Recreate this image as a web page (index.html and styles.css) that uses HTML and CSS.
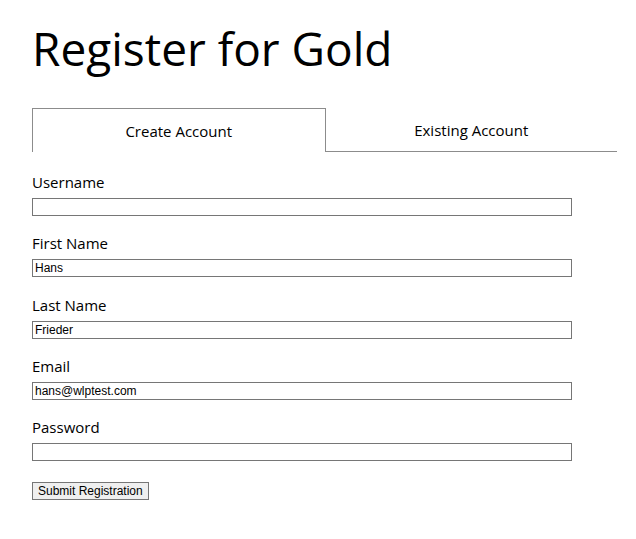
FILE: index.html
```html
<!DOCTYPE html>
<html>
<head>
<meta charset="utf-8">
<link rel="stylesheet" href="styles.css">
</head>
<body>
<div class="page">
  <h1 class="title">Register for Gold</h1>
  <div class="tabs">
    <div class="tab active">Create Account</div>
    <div class="tab">Existing Account</div>
  </div>
  <form class="form">
    <div class="field">
      <label class="label">Username</label>
      <input class="input" type="text" value="">
    </div>
    <div class="field">
      <label class="label">First Name</label>
      <input class="input" type="text" value="Hans">
    </div>
    <div class="field">
      <label class="label">Last Name</label>
      <input class="input" type="text" value="Frieder">
    </div>
    <div class="field">
      <label class="label">Email</label>
      <input class="input" type="text" value="hans@wlptest.com">
    </div>
    <div class="field">
      <label class="label">Password</label>
      <input class="input" type="password" value="">
    </div>
    <div class="actions">
      <button class="button" type="button">Submit Registration</button>
    </div>
  </form>
</div>
</body>
</html>
```
FILE: styles.css
```css
html, body {
  margin: 0;
  padding: 0;
  background: #ffffff;
}
.page {
  padding: 20px 0 0 32px;
  font-family: "Open Sans", "Noto Sans", sans-serif;
  color: #000;
}
.title {
  margin: 0;
  font-size: 46px;
  font-weight: 400;
  line-height: 56px;
}
.tabs {
  margin-top: 32px;
  display: flex;
  width: 585px;
  height: 44px;
}
.tab {
  flex: 1;
  display: flex;
  align-items: center;
  justify-content: center;
  font-size: 15px;
  box-sizing: border-box;
  border-bottom: 1px solid #8c8c8c;
}
.tab.active {
  border: 1px solid #8c8c8c;
  border-bottom: none;
  padding-top: 1px;
}
.form {
  margin-top: 19px;
  display: flex;
  flex-direction: column;
  gap: 16.25px;
}
.field {
  display: flex;
  flex-direction: column;
  gap: 5px;
}
.label {
  font-size: 15px;
  line-height: 22px;
}
.input {
  width: 540px;
  height: 18px;
  box-sizing: border-box;
  margin: 0;
  padding: 0 2px;
  border: 1px solid #767676;
  font-family: "Liberation Sans", Arial, sans-serif;
  font-size: 12px;
  color: #000;
  outline: none;
}
.actions {
  margin-top: 1px;
}
.button {
  height: 18px;
  margin: 0;
  padding: 0 5px;
  box-sizing: border-box;
  border: 1px solid #767676;
  background: #efefef;
  font-family: "Liberation Sans", Arial, sans-serif;
  font-size: 12px;
  line-height: 16px;
  color: #000;
}
```
